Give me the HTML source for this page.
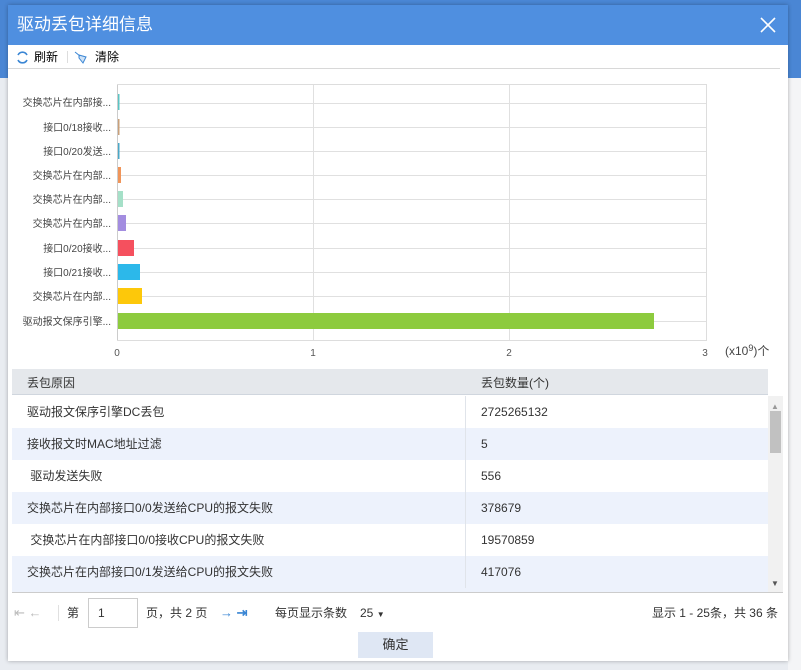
<!DOCTYPE html>
<html><head><meta charset="utf-8"><style>
*{margin:0;padding:0;box-sizing:border-box}
body{width:801px;height:670px;overflow:hidden;background:#e9ecf1;font-family:"Liberation Sans","Noto Sans CJK SC",sans-serif;font-size:12px;color:#333;position:relative}
.bgtop{position:absolute;left:0;top:0;width:801px;height:78px;background:#4a86d4}
.bgr{position:absolute;left:788px;top:78px;width:13px;height:592px;background:#f4f5f7}
.dlg{position:absolute;left:8px;top:5px;width:780px;height:656px;background:#fff;box-shadow:0 0 4px rgba(0,0,0,.3)}
.hd{height:40px;background:#4f8fe0;color:#fff;font-size:17px;line-height:40px;padding-left:9px}
.x{position:absolute;right:10px;top:10px;width:20px;height:20px}
.tb{position:absolute;left:0;top:40px;width:772px;height:24px;border-bottom:1px solid #d8d8d8;line-height:24px;font-size:12px;color:#000}
.ab{position:absolute}
.lbl{position:absolute;right:0;font-size:10px;color:#444;width:105px;text-align:right}
.th{position:absolute;left:4px;top:364px;width:756px;height:26px;background:#e5e8ec;border-bottom:1px solid #d0d6de}
.row{position:absolute;left:4px;width:756px;height:32px;line-height:32px;font-size:12px;color:#333}
.row span{position:absolute;left:15px}
.row b{font-weight:normal;position:absolute;left:469px}
.row i{position:absolute;left:453px;top:0;bottom:0;border-left:1px solid #e0e4ea}
</style></head><body>
<div class="bgtop"></div><div class="bgr"></div>
<div class="dlg">
<div class="hd">驱动丢包详细信息</div>
<svg class="x" viewBox="0 0 20 20"><path d="M3 3L17 17M17 3L3 17" stroke="#fff" stroke-width="1.6"/></svg>
<div class="tb">
<svg style="position:absolute;left:8px;top:6px" width="13" height="13" viewBox="0 0 13 13"><path d="M11 4A5 5 0 0 0 2 4M2 9A5 5 0 0 0 11 9" fill="none" stroke="#3a86d4" stroke-width="1.6"/></svg>
<span style="position:absolute;left:26px">刷新</span>
<span style="position:absolute;left:59px;top:6px;height:12px;border-left:1px solid #ddd"></span>
<svg style="position:absolute;left:66px;top:6px" width="16" height="13" viewBox="0 0 16 13"><path d="M1 1L6 5M5 4L12 6L9 12L5 7Z" fill="#cfe2f6" stroke="#3a86d4" stroke-width="1"/></svg>
<span style="position:absolute;left:87px">清除</span>
</div>
<!-- chart: plot area page x117-706 y84-340 -> dlg x109-698 y79-335 -->
<svg class="ab" style="left:0;top:0" width="780" height="360">
<rect x="109.5" y="79.5" width="589" height="256" fill="none" stroke="#ddd"/>
<g stroke="#e0e0e0"><line x1="305.5" y1="80" x2="305.5" y2="335"/><line x1="501.5" y1="80" x2="501.5" y2="335"/>
<line x1="110" y1="98.5" x2="698" y2="98.5"/><line x1="110" y1="122.5" x2="698" y2="122.5"/><line x1="110" y1="146.5" x2="698" y2="146.5"/><line x1="110" y1="170.5" x2="698" y2="170.5"/><line x1="110" y1="194.5" x2="698" y2="194.5"/><line x1="110" y1="218.5" x2="698" y2="218.5"/><line x1="110" y1="243.5" x2="698" y2="243.5"/><line x1="110" y1="267.5" x2="698" y2="267.5"/><line x1="110" y1="291.5" x2="698" y2="291.5"/><line x1="110" y1="316.5" x2="698" y2="316.5"/></g>
<line x1="109.5" y1="80" x2="109.5" y2="335" stroke="#ccc"/>
<rect x="110" y="89" width="1.5" height="16" fill="#5bc4c4"/>
<rect x="110" y="114" width="1.5" height="16" fill="#c9a07a"/>
<rect x="110" y="138" width="1.5" height="16" fill="#4aa8c8"/>
<rect x="110" y="162" width="3" height="16" fill="#f0955a"/>
<rect x="110" y="186" width="5" height="16" fill="#a5e0c8"/>
<rect x="110" y="210" width="8" height="16" fill="#a38de0"/>
<rect x="110" y="235" width="16" height="16" fill="#f5505e"/>
<rect x="110" y="259" width="22" height="16" fill="#2cb8ea"/>
<rect x="110" y="283" width="24" height="16" fill="#fdc80a"/>
<rect x="110" y="308" width="536" height="16" fill="#8dcb3e"/>
<g font-size="10" fill="#555" font-family="Liberation Sans,sans-serif" text-anchor="middle"><text x="109" y="351">0</text><text x="305" y="351">1</text><text x="501" y="351">2</text><text x="697" y="351">3</text></g>
<text x="717" y="350" font-size="12" fill="#444" font-family="Liberation Sans,sans-serif">(x10<tspan font-size="9" dy="-4">9</tspan><tspan dy="4">)个</tspan></text>
<g font-size="10" fill="#444" font-family="Liberation Sans,Noto Sans CJK SC,sans-serif" text-anchor="end">
<text x="103" y="101">交换芯片在内部接...</text><text x="103" y="126">接口0/18接收...</text><text x="103" y="150">接口0/20发送...</text><text x="103" y="174">交换芯片在内部...</text><text x="103" y="198">交换芯片在内部...</text><text x="103" y="222">交换芯片在内部...</text><text x="103" y="247">接口0/20接收...</text><text x="103" y="271">接口0/21接收...</text><text x="103" y="295">交换芯片在内部...</text><text x="103" y="320">驱动报文保序引擎...</text></g>
</svg>
<div class="th"><span style="position:absolute;left:15px;top:5px">丢包原因</span><span style="position:absolute;left:469px;top:5px">丢包数量(个)</span></div>
<div class="row" style="top:391px;background:#fff"><span>驱动报文保序引擎DC丢包</span><i></i><b>2725265132</b></div>
<div class="row" style="top:423px;background:#edf2fc"><span>接收报文时MAC地址过滤</span><i></i><b>5</b></div>
<div class="row" style="top:455px;background:#fff"><span>&nbsp;驱动发送失败</span><i></i><b>556</b></div>
<div class="row" style="top:487px;background:#edf2fc"><span>交换芯片在内部接口0/0发送给CPU的报文失败</span><i></i><b>378679</b></div>
<div class="row" style="top:519px;background:#fff"><span>&nbsp;交换芯片在内部接口0/0接收CPU的报文失败</span><i></i><b>19570859</b></div>
<div class="row" style="top:551px;background:#edf2fc"><span>交换芯片在内部接口0/1发送给CPU的报文失败</span><i></i><b>417076</b></div>
<div class="ab" style="left:4px;top:583px;width:756px;height:4px;background:#edf2fc"></div>
<div class="ab" style="left:760px;top:391px;width:15px;height:196px;background:#f1f1f1"></div>
<div class="ab" style="left:762px;top:406px;width:11px;height:42px;background:#c1c1c1"></div>
<div class="ab" style="left:763px;top:397px;font-size:8px;color:#999">▲</div>
<div class="ab" style="left:763px;top:574px;font-size:8px;color:#555">▼</div>
<div class="ab" style="left:4px;top:587px;width:771px;border-top:1px solid #ccc"></div>
<div class="ab" style="left:0;top:592px;width:780px;height:32px;line-height:32px;font-size:12px;color:#333">
<span class="ab" style="left:6px;color:#bbb;font-size:13px">⇤ ←</span>
<span class="ab" style="left:50px;top:8px;height:16px;border-left:1px solid #e0e0e0"></span>
<span class="ab" style="left:59px">第</span>
<span class="ab" style="left:80px;top:1px;width:50px;height:30px;border:1px solid #ccc;line-height:28px;padding-left:9px">1</span>
<span class="ab" style="left:138px">页，共 2 页</span>
<span class="ab" style="left:212px;color:#3a86d4;font-weight:bold;font-size:13px">→ ⇥</span>
<span class="ab" style="left:267px">每页显示条数</span>
<span class="ab" style="left:352px">25 <small style="font-size:8px">▼</small></span>
<span class="ab" style="right:10px">显示 1 - 25条，共 36 条</span>
</div>
<div class="ab" style="left:350px;top:627px;width:75px;height:26px;background:#dfe7f4;text-align:center;line-height:26px;font-size:13px">确定</div>
</div>
</body></html>
